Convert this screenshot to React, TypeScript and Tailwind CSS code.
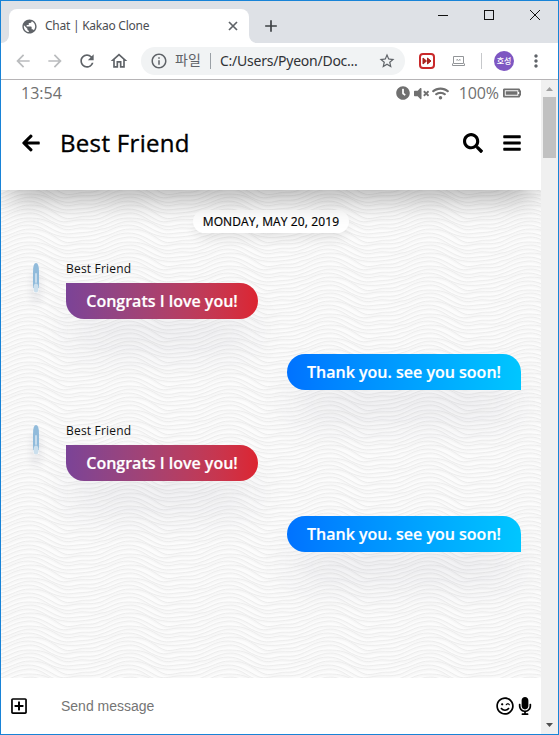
import type { ReactNode } from "react";
import {
  FaArrowLeft, FaBars, FaBatteryFull, FaClock, FaMicrophone, FaRegPlusSquare,
  FaRegSmileWink, FaSearch, FaVolumeMute, FaWifi,
} from "react-icons/fa";
import {
  MdArrowBack, MdArrowForward, MdPublic, MdRefresh, MdOutlineHome, MdOutlineInfo,
  MdStarBorder, MdMoreVert, MdAdd,
} from "react-icons/md";

const ui = "font-['Noto_Sans','Noto_Sans_CJK_KR',sans-serif]";

function TabStrip() {
  return (
    <div className="flex h-[42px] shrink-0 bg-[#dee1e6] pt-2">
      <div className="flex h-[34px] w-2 items-end bg-white">
        <div className="h-full w-full rounded-br-lg bg-[#dee1e6]" />
      </div>
      <div className="flex w-[240px] items-center rounded-t-lg bg-white pl-3 pr-[9px]">
        <MdPublic className="size-[17px] text-[#5f6368]" />
        <span className={`${ui} ml-[7px] w-[104px] whitespace-nowrap text-[12px] tracking-[-0.25px] text-[#4b4e52]`}>
          Chat | Kakao Clone
        </span>
        <svg className="ml-auto size-[14px]" viewBox="0 0 14 14" stroke="#5f6368" strokeWidth="1.700">
          <path d="M3 3l8 8M11 3l-8 8" />
        </svg>
      </div>
      <div className="h-[34px] w-2 bg-white">
        <div className="h-full w-full rounded-bl-lg bg-[#dee1e6]" />
      </div>
      <MdAdd className="ml-[4px] mt-[7px] size-[20px] text-[#3c4043]" />
      <svg className="-mt-2 ml-auto mr-[16px] h-8 w-[104px]" viewBox="0 0 104 32" fill="none" stroke="#111" shapeRendering="crispEdges">
        <path d="M0 14.5h10M46.500 9.500h9v9h-9z" />
        <path d="M92 9l10 10M102 9l-10 10" shapeRendering="geometricPrecision" />
      </svg>
    </div>
  );
}

function Toolbar() {
  return (
    <div className="flex h-[37px] shrink-0 items-center border-b border-[#b6b4b6] bg-white text-[#5f6368]">
      <MdArrowBack className="ml-[12px] size-5 text-[#babcbe]" />
      <MdArrowForward className="ml-[12px] size-5 text-[#babcbe]" />
      <MdRefresh className="ml-[12px] size-5" />
      <MdOutlineHome className="ml-[12px] size-5" />
      <div className="ml-[12px] flex h-7 w-[264px] items-center rounded-full bg-[#f1f3f4] pl-[9px] pr-[9px]">
        <MdOutlineInfo className="size-[18px]" />
        <span className={`${ui} -mt-0.5 ml-[7px] w-[28px] whitespace-nowrap text-[14px] leading-5`}>파일</span>
        <span className="ml-[7px] h-4 w-px bg-[#9aa0a6]" />
        <span className={`${ui} -mt-px ml-[9px] whitespace-nowrap text-[14px] tracking-[-0.25px] text-[#303236]`}>C:/Users/Pyeon/Doc...</span>
        <MdStarBorder className="ml-auto size-[18px]" />
      </div>
      <svg className="ml-[14px] size-4" viewBox="0 0 16 16">
        <rect x="1" y="1" width="14" height="14" rx="3" fill="#fff" stroke="#c9292a" strokeWidth="2" />
        <path d="M4 5l3.500 3-3.500 3zM8.500 5l3.500 3-3.500 3z" fill="#a8241e" stroke="#a8241e" />
      </svg>
      <svg className="ml-[17px] h-[10px] w-[13px]" viewBox="0 0 13 10" fill="none" stroke="#929598">
        <path d="M1.500.500h10v7h-10zM.500 7.500v2h12v-2" />
        <path d="M5 5V3l1.500 1.500L8 3v2" strokeWidth=".7" />
      </svg>
      <span className="ml-[16px] h-4 w-px bg-[#c6c8cb]" />
      <span className={`${ui} ml-[12px] flex size-5 items-center justify-center whitespace-nowrap rounded-full bg-[#7e57c2] text-[8px] font-medium text-white`}>호성</span>
      <MdMoreVert className="ml-[12px] size-5" />
    </div>
  );
}

function PhoneHeader() {
  return (
    <header className="relative z-10 h-[110px] shrink-0 bg-white px-5 shadow-[0_14px_28px_-8px_rgba(0,0,0,0.33)]">
      <div className="flex h-[26px] items-center text-[16px] text-[#707070]">
        <span>13:54</span>
        <FaClock className="ml-auto size-[14px]" />
        <FaVolumeMute className="ml-[4px] size-[15px]" />
        <FaWifi className="ml-[3px] size-[17px]" />
        <span className="ml-[10px] tracking-[-0.1px]">100%</span>
        <FaBatteryFull className="ml-[4px] size-[18px]" />
      </div>
      <div className="flex h-[74px] items-center text-black">
        <FaArrowLeft className="size-5" />
        <h1 className="ml-[19px] text-[24px] leading-8 tracking-[0.32px] [-webkit-text-stroke:0.35px_black]">Best Friend</h1>
        <FaSearch className="ml-auto size-5" />
        <FaBars className="-mr-px ml-[19px] size-[20px]" />
      </div>
    </header>
  );
}

// Folds of one tile, top to bottom; each is drawn as a thin crease with a soft shade below it.
const folds = [
  "M0 8C10 4 15 0 27 -1S44 5 54 9S68 13 76 11S90 12 100 8",
  "M0 12C11 9 14 4 27 4S46 6 56 12S70 15 78 14S91 16 100 12",
  "M0 15C8 15 18 7 29 7S46 13 55 17S67 20 76 19S88 19 100 15",
  "M0 19C10 17 15 11 27 11S44 17 52 20S68 24 78 23S91 22 100 19",
  "M0 23C12 21 17 15 29 15S47 18 56 24S68 29 78 27S91 28 100 23",
  "M0 28C9 24 16 19 27 19S45 24 54 29S67 31 76 30S88 31 100 28",
];

function Waves() {
  return (
    <svg className="absolute inset-0 h-full w-full" aria-hidden="true">
      <defs>
        <pattern id="waves" width="100" height="24" patternUnits="userSpaceOnUse">
          <rect width="100" height="24" fill="#fcfcfc" />
          {[-24, 0, 24].map((y) => (
            <g key={y} transform={`translate(0 ${y})`} fill="none">
              {folds.map((d) => (
                <g key={d}>
                  <path d={d} transform="translate(0 1)" stroke="#f7f7f7" strokeWidth="2" />
                  <path d={d} stroke="#ebebeb" strokeWidth=".9" />
                </g>
              ))}
            </g>
          ))}
        </pattern>
      </defs>
      <rect width="100%" height="100%" fill="url(#waves)" />
    </svg>
  );
}

function Avatar() {
  return (
    <div className="mt-px flex h-[31px] w-[30px] justify-center">
      <div className="h-[30px] w-[6px] rounded-full shadow-[0_10px_8px_rgba(40,40,70,0.12)]">
        <svg viewBox="0 0 6 30" className="block h-[30px] w-[6px]">
          <path d="M0 25V9Q0 0 3 0t3 9v16z" fill="#91bbdb" />
          <rect x="2" y="10" width="2" height="10" rx="1" fill="#c6dced" />
          <ellipse cx="3" cy="25" rx="2.500" ry="4.500" fill="#cbdfed" />
        </svg>
      </div>
    </div>
  );
}

function Bubble({ mine = false, children }: { mine?: boolean; children: ReactNode }) {
  const look = mine
    ? "w-[234px] rounded-br-none bg-linear-to-r from-[#0072ff] to-[#00c6ff]"
    : "w-[192px] rounded-tl-none bg-linear-to-r from-[#7b4397] to-[#dc2430]";
  return (
    <div className={`${look} flex h-9 items-center justify-center whitespace-nowrap rounded-[18px] text-[16px] font-semibold text-white shadow-[0_30px_40px_-5px_rgba(50,50,93,0.1)] [-webkit-text-stroke:0.2px_white]`}>
      {children}
    </div>
  );
}

function Exchange() {
  return (
    <div className="flex h-[162px] flex-col">
      <div className="flex gap-[15px]">
        <Avatar />
        <div>
          <div className="mb-[4px] h-[17px] text-[12px] leading-[14px] tracking-[0.2px] text-[#111]">Best Friend</div>
          <Bubble>Congrats I love you!</Bubble>
        </div>
      </div>
      <div className="mt-[35px] flex justify-end">
        <Bubble mine>Thank you. see you soon!</Bubble>
      </div>
    </div>
  );
}

function Scrollbar() {
  return (
    <div className="flex w-[17px] shrink-0 flex-col items-center bg-[#f0f0f0]">
      <svg className="h-[17px] w-[17px]" viewBox="0 0 17 17"><path d="M5 11h7L8.500 7z" fill="#a0a0a0" /></svg>
      <div className="h-[61px] w-[13px] bg-[#c1c1c1]" />
      <svg className="mt-auto h-[17px] w-[17px]" viewBox="0 0 17 17"><path d="M5 6h7l-3.500 4z" fill="#505050" /></svg>
    </div>
  );
}

export default function App() {
  return (
    <div className="flex h-[735px] w-[559px] flex-col overflow-hidden border border-[#1883d7] bg-white font-['Open_Sans',sans-serif]">
      <TabStrip />
      <Toolbar />
      <div className="flex min-h-0 flex-1">
        <div className="flex w-[540px] flex-col overflow-hidden">
          <PhoneHeader />
          <main className="relative min-h-0 flex-1">
            <Waves />
            <div className="relative px-5 pt-[20px]">
              <div className="mx-auto mb-[29px] flex h-[23px] w-[156px] items-center justify-center whitespace-nowrap rounded-full bg-white text-[12px] tracking-[0.13px] text-black shadow-[0_8px_12px_-2px_rgba(0,0,0,0.08)] [-webkit-text-stroke:0.2px_black]">
                MONDAY, MAY 20, 2019
              </div>
              <Exchange />
              <Exchange />
            </div>
          </main>
          <footer className="relative z-10 flex h-14 shrink-0 items-center bg-white pl-[9px] pr-[7px] text-black">
            <FaRegPlusSquare className="size-[18px]" />
            <input placeholder="Send message" className="ml-[33px] min-w-0 flex-1 font-['Liberation_Sans',sans-serif] text-[14px] outline-none placeholder:text-[#757575]" />
            <FaRegSmileWink className="size-[18px]" />
            <FaMicrophone className="ml-[2px] size-[18px]" />
          </footer>
        </div>
        <Scrollbar />
      </div>
    </div>
  );
}
